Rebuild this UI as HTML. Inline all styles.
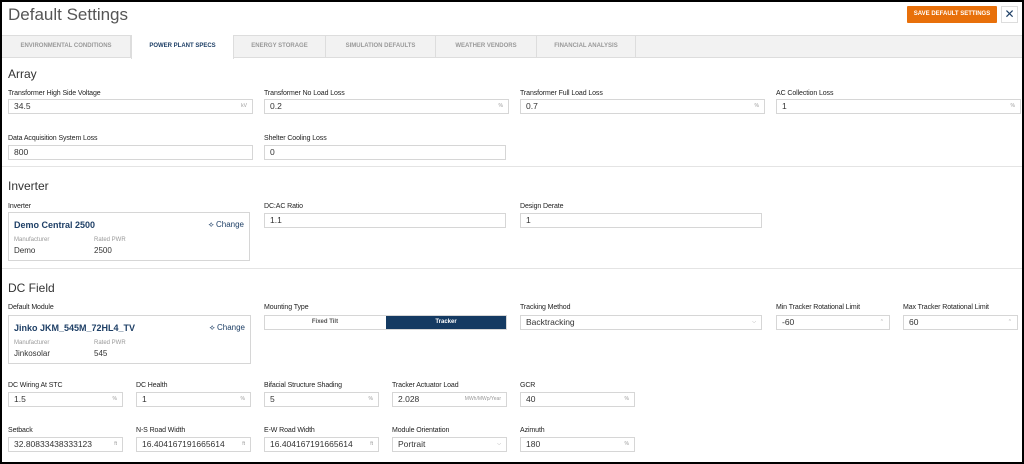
<html><head><style>
body{margin:0;width:1024px;height:464px;overflow:hidden;font-family:"Liberation Sans",sans-serif;background:#000}
#w{position:absolute;left:2px;top:2px;width:1020px;height:460px;background:#fff;overflow:hidden}
.a{position:absolute}
.l{position:absolute;font-size:7px;color:#222;white-space:nowrap;letter-spacing:-0.1px}
.i{position:absolute;height:15px;border:1px solid #d6d6d6;box-sizing:border-box;font-size:8.5px;color:#333;padding-left:5px;line-height:13px;background:#fff}
.i span{position:absolute;right:5px;top:0;font-size:5px;color:#999}
.h{position:absolute;font-size:12px;color:#333}
.tab{position:absolute;top:33px;height:23px;font-size:6px;font-weight:bold;color:#999;text-align:center;line-height:23px;border-right:1px solid #ddd;box-sizing:border-box}
.hr{position:absolute;left:0;width:1020px;height:1px;background:#e4e4e4}
.card{position:absolute;border:1px solid #d6d6d6;box-sizing:border-box}
.card .n{position:absolute;left:5px;top:7px;font-size:9px;color:#1e3f66;font-weight:bold}
.card .c{position:absolute;right:5px;top:7px;font-size:8px;color:#1e3f66}
.card .m{position:absolute;font-size:6px;color:#999}
.card .v{position:absolute;font-size:8px;color:#333}
</style></head><body><div id="w">
<div class="a" style="left:6px;top:3px;font-size:17px;color:#555">Default Settings</div>
<div class="a" style="left:905px;top:4px;width:90px;height:17px;background:#e8700a;color:#fff;font-size:6px;font-weight:bold;text-align:center;line-height:17px;border-radius:1px">SAVE DEFAULT SETTINGS</div>
<div class="a" style="left:999px;top:4px;width:17px;height:17px;border:1px solid #ddd;box-sizing:border-box;color:#1e3f66;font-size:12px;text-align:center;line-height:15px">✕</div>
<div class="a" style="left:0;top:33px;width:1020px;height:23px;background:#f2f2f2;border-top:1px solid #ddd;border-bottom:1px solid #ddd;box-sizing:border-box"></div>
<div class="tab" style="left:0;width:129px">ENVIRONMENTAL CONDITIONS</div>
<div class="tab" style="left:129px;width:103px;background:#fff;color:#1e3f66;height:24px;border-left:1px solid #ddd">POWER PLANT SPECS</div>
<div class="tab" style="left:232px;width:92px">ENERGY STORAGE</div>
<div class="tab" style="left:324px;width:110px">SIMULATION DEFAULTS</div>
<div class="tab" style="left:434px;width:101px">WEATHER VENDORS</div>
<div class="tab" style="left:535px;width:99px">FINANCIAL ANALYSIS</div>

<div class="h" style="left:6px;top:65px">Array</div>
<div class="l" style="left:6px;top:88px">Transformer High Side Voltage</div>
<div class="i" style="left:6px;top:97px;width:245px">34.5<span>kV</span></div>
<div class="l" style="left:262px;top:88px">Transformer No Load Loss</div>
<div class="i" style="left:262px;top:97px;width:245px">0.2<span>%</span></div>
<div class="l" style="left:518px;top:88px">Transformer Full Load Loss</div>
<div class="i" style="left:518px;top:97px;width:245px">0.7<span>%</span></div>
<div class="l" style="left:774px;top:88px">AC Collection Loss</div>
<div class="i" style="left:774px;top:97px;width:245px">1<span>%</span></div>
<div class="l" style="left:6px;top:133px">Data Acquisition System Loss</div>
<div class="i" style="left:6px;top:143px;width:245px">800</div>
<div class="l" style="left:262px;top:133px">Shelter Cooling Loss</div>
<div class="i" style="left:262px;top:143px;width:242px">0</div>
<div class="hr" style="top:164px"></div>

<div class="h" style="left:6px;top:177px">Inverter</div>
<div class="l" style="left:6px;top:201px">Inverter</div>
<div class="card" style="left:6px;top:210px;width:242px;height:49px"><div class="n">Demo Central 2500</div><div class="c">⟡ Change</div>
<div class="m" style="left:5px;top:24px">Manufacturer</div><div class="m" style="left:85px;top:24px">Rated PWR</div>
<div class="v" style="left:5px;top:33px">Demo</div><div class="v" style="left:85px;top:33px">2500</div></div>
<div class="l" style="left:262px;top:201px">DC:AC Ratio</div>
<div class="i" style="left:262px;top:211px;width:242px">1.1</div>
<div class="l" style="left:518px;top:201px">Design Derate</div>
<div class="i" style="left:518px;top:211px;width:242px">1</div>
<div class="hr" style="top:266px"></div>

<div class="h" style="left:6px;top:279px">DC Field</div>
<div class="l" style="left:6px;top:302px">Default Module</div>
<div class="card" style="left:6px;top:313px;width:243px;height:49px"><div class="n">Jinko JKM_545M_72HL4_TV</div><div class="c">⟡ Change</div>
<div class="m" style="left:5px;top:24px">Manufacturer</div><div class="m" style="left:85px;top:24px">Rated PWR</div>
<div class="v" style="left:5px;top:33px">Jinkosolar</div><div class="v" style="left:85px;top:33px">545</div></div>
<div class="l" style="left:262px;top:302px">Mounting Type</div>
<div class="i" style="left:262px;top:313px;width:243px;padding:0"><div class="a" style="left:0;top:0;width:120px;text-align:center;font-size:6px;font-weight:bold;color:#555">Fixed Tilt</div><div class="a" style="left:121px;top:0;width:120px;height:13px;background:#143a62;color:#fff;text-align:center;font-size:6px;font-weight:bold">Tracker</div></div>
<div class="l" style="left:518px;top:302px">Tracking Method</div>
<div class="i" style="left:518px;top:313px;width:242px">Backtracking<span>⌵</span></div>
<div class="l" style="left:774px;top:302px">Min Tracker Rotational Limit</div>
<div class="i" style="left:774px;top:313px;width:114px">-60<span>⌃</span></div>
<div class="l" style="left:901px;top:302px">Max Tracker Rotational Limit</div>
<div class="i" style="left:901px;top:313px;width:115px">60<span>⌃</span></div>

<div class="l" style="left:6px;top:380px">DC Wiring At STC</div>
<div class="i" style="left:6px;top:390px;width:115px">1.5<span>%</span></div>
<div class="l" style="left:134px;top:380px">DC Health</div>
<div class="i" style="left:134px;top:390px;width:115px">1<span>%</span></div>
<div class="l" style="left:262px;top:380px">Bifacial Structure Shading</div>
<div class="i" style="left:262px;top:390px;width:115px">5<span>%</span></div>
<div class="l" style="left:390px;top:380px">Tracker Actuator Load</div>
<div class="i" style="left:390px;top:390px;width:115px">2.028<span>MWh/MWp/Year</span></div>
<div class="l" style="left:518px;top:380px">GCR</div>
<div class="i" style="left:518px;top:390px;width:115px">40<span>%</span></div>

<div class="l" style="left:6px;top:425px">Setback</div>
<div class="i" style="left:6px;top:435px;width:115px">32.80833438333123<span>ft</span></div>
<div class="l" style="left:134px;top:425px">N-S Road Width</div>
<div class="i" style="left:134px;top:435px;width:115px">16.404167191665614<span>ft</span></div>
<div class="l" style="left:262px;top:425px">E-W Road Width</div>
<div class="i" style="left:262px;top:435px;width:115px">16.404167191665614<span>ft</span></div>
<div class="l" style="left:390px;top:425px">Module Orientation</div>
<div class="i" style="left:390px;top:435px;width:115px">Portrait<span>⌵</span></div>
<div class="l" style="left:518px;top:425px">Azimuth</div>
<div class="i" style="left:518px;top:435px;width:115px">180<span>%</span></div>
</div></body></html>
